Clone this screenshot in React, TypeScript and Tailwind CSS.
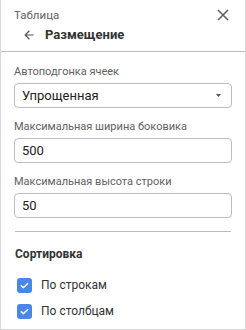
import React from "react";

const Check = () => (
  <span className="flex h-[15px] w-[15px] items-center justify-center rounded-[3px] bg-[#4a86e8]">
    <svg width="11" height="11" viewBox="0 0 24 24" fill="none" stroke="white" strokeWidth="3.2" strokeLinecap="round" strokeLinejoin="round">
      <path d="M5 12.5l4.5 4.5L19 7.5" />
    </svg>
  </span>
);

const Field = ({ label, children }: { label: string; children: React.ReactNode }) => (
  <div className="flex flex-col">
    <div className="text-[11px] leading-[14px] text-[#616161]">{label}</div>
    <div className="mt-[4px] flex h-[25px] items-center rounded-[4px] border border-[#bdbdbd] px-[7px] text-[13px] text-[#212121]">
      {children}
    </div>
  </div>
);

export default function App() {
  return (
    <div
      className="flex h-[330px] w-[246px] flex-col border-x border-b border-[#d6d6d6] bg-white"
      style={{ fontFamily: "Roboto, 'Liberation Sans', sans-serif" }}
    >
      <div className="flex h-[52px] flex-col border-b border-[#bdbdbd] pl-[13px] pr-[16px]">
        <div className="flex items-center justify-between pt-[7px]">
          <span className="text-[11.5px] leading-[16px] text-[#616161]">Таблица</span>
          <svg width="12" height="12" viewBox="0 0 12 12" stroke="#616161" strokeWidth="1.6">
            <path d="M1 1l10 10M11 1L1 11" />
          </svg>
        </div>
        <div className="mt-[4px] flex items-center">
          <svg width="14" height="14" viewBox="0 0 24 24" fill="#555" className="ml-[8px]">
            <path d="M20 11H7.83l5.59-5.59L12 4l-8 8 8 8 1.41-1.41L7.83 13H20v-2z" />
          </svg>
          <span className="ml-[9px] text-[13px] font-bold leading-[16px] text-[#333]">Размещение</span>
        </div>
      </div>
      <div className="flex flex-col gap-[12px] px-[13px] pt-[13px]">
        <Field label="Автоподгонка ячеек">
          <span className="flex-1">Упрощенная</span>
          <svg width="5" height="3" viewBox="0 0 5 3" className="mr-[3px]">
            <path d="M0 0h5L2.5 3z" fill="#555" />
          </svg>
        </Field>
        <Field label="Максимальная ширина боковика">500</Field>
        <Field label="Максимальная высота строки">50</Field>
      </div>
      <div className="mx-[14px] mt-[13px] border-t border-[#bdbdbd]" />
      <div className="px-[14px] pt-[14px] text-[12px] font-bold leading-[16px] text-[#333]">Сортировка</div>
      <div className="mt-[16px] flex flex-col gap-[11px] pl-[16px]">
        <label className="flex items-center gap-[9px] text-[12px] leading-[15px] text-[#333]">
          <Check />
          По строкам
        </label>
        <label className="flex items-center gap-[9px] text-[12px] leading-[15px] text-[#333]">
          <Check />
          По столбцам
        </label>
      </div>
    </div>
  );
}
